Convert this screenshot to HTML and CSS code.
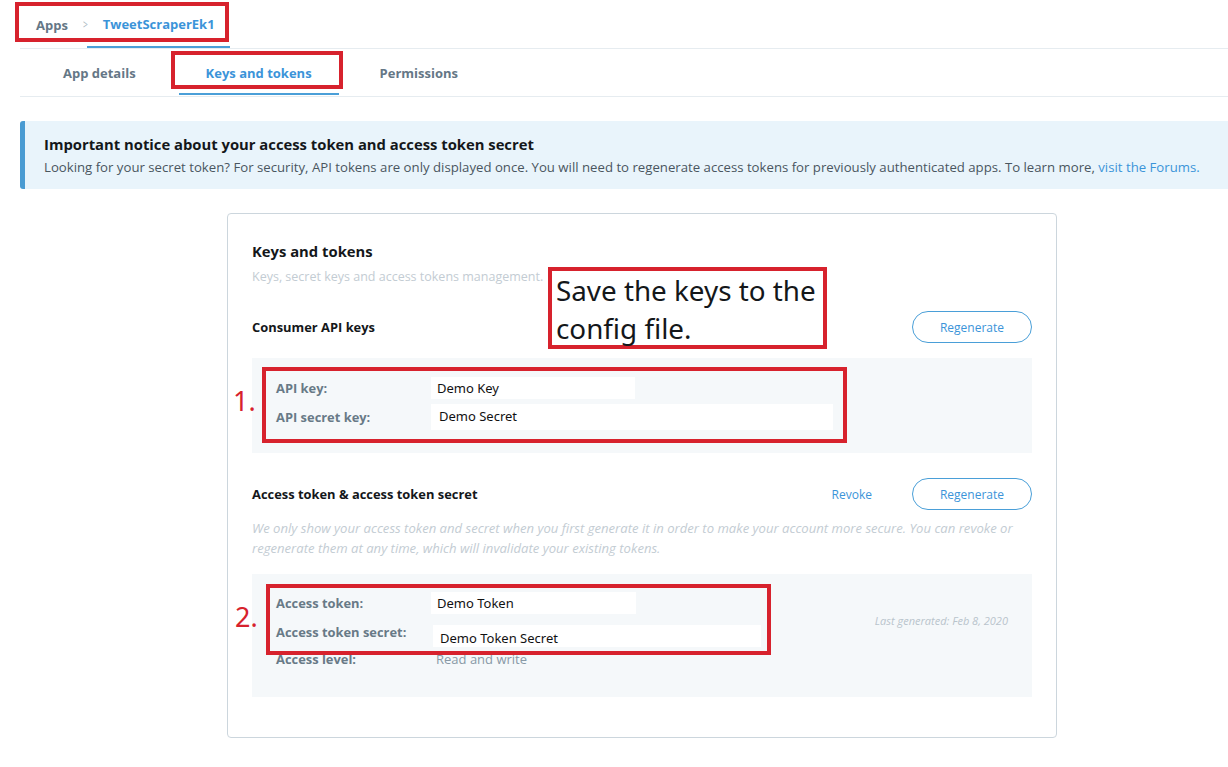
FILE: index.html
```html
<!DOCTYPE html>
<html>
<head>
<meta charset="utf-8">
<link rel="stylesheet" href="styles.css">
</head>
<body>
<div class="page">
  <div class="crumbbar">
    <div class="crumbs">
      <span class="crumb">Apps</span>
      <span class="chev">&gt;</span>
      <span class="crumb active">TweetScraperEk1</span>
    </div>
    <div class="mark mark-crumb"></div>
  </div>
  <nav class="tabs">
    <span class="tab tab-first">App details</span>
    <span class="tab active">Keys and tokens</span>
    <span class="tab tab-last">Permissions</span>
    <div class="mark mark-tab"></div>
  </nav>

  <div class="notice">
    <div class="notice-title">Important notice about your access token and access token secret</div>
    <div class="notice-text">Looking for your secret token? For security, API tokens are only displayed once. You will need to regenerate access tokens for previously authenticated apps. To learn more, <a class="link">visit the Forums.</a></div>
  </div>

  <div class="card">
    <h2 class="card-title">Keys and tokens</h2>
    <p class="card-sub">Keys, secret keys and access tokens management.</p>

    <div class="section-head head-consumer">
      <h3 class="section-title">Consumer API keys</h3>
      <div class="actions"><button class="btn">Regenerate</button></div>
    </div>

    <div class="keybox box1">
      <div class="kv"><span class="k">API key:</span><span class="v v1">Demo Key</span></div>
      <div class="kv kv-tall"><span class="k">API secret key:</span><span class="v v2">Demo Secret</span></div>
      <div class="mark mark-box1"></div>
      <span class="num num1">1.</span>
    </div>

    <div class="section-head head-access">
      <h3 class="section-title">Access token &amp; access token secret</h3>
      <div class="actions"><a class="revoke">Revoke</a><button class="btn">Regenerate</button></div>
    </div>
    <p class="note">We only show your access token and secret when you first generate it in order to make your account more secure. You can revoke or regenerate them at any time, which will invalidate your existing tokens.</p>

    <div class="keybox box2">
      <div class="box2-rows">
        <div class="kv"><span class="k">Access token:</span><span class="v v3">Demo Token</span></div>
        <div class="kv kv-tall2"><span class="k k-up">Access token secret:</span><span class="v v4">Demo Token Secret</span></div>
        <div class="kv kv-plain"><span class="k">Access level:</span><span class="plain">Read and write</span></div>
      </div>
      <div class="lastgen">Last generated: Feb 8, 2020</div>
      <div class="mark mark-box2"></div>
      <span class="num num2">2.</span>
    </div>

    <div class="annot">Save the keys to the config file.</div>
  </div>
</div>
</body>
</html>
```

FILE: styles.css
```css
* { box-sizing: border-box; }
html, body { margin: 0; padding: 0; background: #fff; }
body {
  font-family: "Open Sans", "Noto Sans", "DejaVu Sans", sans-serif;
  color: #14171a;
  width: 1228px;
  height: 767px;
  overflow: hidden;
}
.page { padding-left: 20px; }

.mark {
  position: absolute;
  border: 4px solid #d7222d;
  pointer-events: none;
}

/* breadcrumb */
.crumbbar {
  position: relative;
  height: 49px;
  border-bottom: 1px solid #e6ecf0;
  padding-left: 16px;
}
.crumbs {
  display: flex;
  align-items: stretch;
  height: 48px;
  font-size: 13px;
  font-weight: 700;
}
.crumb {
  display: flex;
  align-items: center;
  padding-top: 5px;
  padding-bottom: 3px;
  color: #657786;
}
.crumb.active {
  color: #3b94d9;
  border-bottom: 2px solid #4a9fd8;
  margin-left: -16px;
  padding-left: 16px;
  padding-right: 15px;
}
.chev {
  display: flex;
  align-items: center;
  padding: 5px 14px 5px 14px;
  font-weight: 400;
  color: #aab8c2;
  font-size: 12px;
  transform: scaleX(0.7);
}
.mark-crumb { left: -5px; top: 2px; width: 214px; height: 40px; }

/* tabs */
.tabs {
  position: relative;
  display: flex;
  height: 48px;
  border-bottom: 1px solid #e6ecf0;
  font-size: 13px;
  font-weight: 700;
}
.tab {
  display: flex;
  align-items: center;
  color: #657786;
}
.tab-first { margin-left: 43px; }
.tab.active {
  color: #3b94d9;
  margin-left: 43px;
  padding: 3px 27px 0 27px;
  border-bottom: 2px solid #4a9fd8;
  margin-bottom: 1px;
}
.tab-last { margin-left: 41px; }
.mark-tab { left: 151px; top: 2px; width: 172px; height: 38px; }

/* notice */
.notice {
  margin-top: 24px;
  height: 68px;
  background: #e9f4fb;
  border-left: 5px solid #4a9bd2;
  border-radius: 3px 0 0 3px;
  padding: 12px 0 0 19px;
}
.notice-title {
  font-size: 14.8px;
  font-weight: 700;
  line-height: 22px;
  color: #14171a;
}
.notice-text {
  font-size: 13.2px;
  line-height: 24px;
  color: #4a565f;
  white-space: nowrap;
}
.link { color: #3b94d9; }

/* card */
.card {
  position: relative;
  margin: 24px 0 0 207px;
  width: 830px;
  height: 525px;
  border: 1px solid #ccd6dd;
  border-radius: 4px;
  padding: 26px 24px 0 24px;
}
.card-title {
  margin: 0;
  font-size: 14.8px;
  line-height: 22px;
  font-weight: 700;
}
.card-sub {
  margin: 6px 0 0;
  font-size: 12.5px;
  line-height: 18px;
  color: #c3ccd3;
}
.section-head {
  display: flex;
  justify-content: space-between;
  align-items: center;
  height: 32px;
}
.head-consumer { margin-top: 25px; }
.head-access { margin-top: 25px; }
.section-title {
  margin: 0;
  font-size: 12.9px;
  font-weight: 700;
}
.actions { display: flex; align-items: center; }
.btn {
  width: 120px;
  height: 32px;
  border: 1px solid #4a9fd8;
  border-radius: 16px;
  background: #fff;
  color: #3b94d9;
  font-family: inherit;
  font-size: 12px;
  padding: 0;
}
.revoke {
  color: #3b94d9;
  font-size: 12px;
  margin-right: 40px;
}

.keybox {
  position: relative;
  background: #f5f8fa;
  width: 780px;
}
.box1 { margin-top: 15px; height: 95px; padding: 19px 0 0 24px; }
.kv {
  display: flex;
  align-items: center;
  height: 22px;
}
.kv-tall { height: 26px; margin-top: 5px; }
.k {
  width: 155px;
  font-size: 12.9px;
  font-weight: 700;
  color: #687a87;
}
.v {
  display: flex;
  align-items: center;
  align-self: stretch;
  background: #fff;
  font-family: "Noto Sans", "Open Sans", sans-serif;
  font-size: 13px;
  color: #111;
  padding-left: 6px;
}
.v1 { width: 204px; }
.v2 { width: 402px; padding-left: 8px; padding-bottom: 2px; }
.v3 { width: 205px; }
.v4 { width: 328px; margin-left: 2px; padding-left: 7px; padding-top: 4px; }
.plain { font-size: 13px; color: #8899a6; padding-left: 5px; }

.note {
  margin: 8px 0 0;
  font-size: 13.1px;
  line-height: 20px;
  font-style: italic;
  color: #c3ccd3;
}
.box2 {
  margin-top: 16px;
  height: 123px;
  display: flex;
  justify-content: space-between;
  padding: 18px 24px 0 24px;
}
.kv-tall2 { height: 22px; margin-top: 11px; }
.k-up { align-self: flex-start; margin-top: -2px; }
.kv-plain { height: 18px; margin-top: 3px; }
.lastgen {
  margin-top: 21px;
  font-size: 11px;
  font-style: italic;
  color: #b9c4cc;
}

.mark-box1 { left: 10px; top: 9px; width: 585px; height: 76px; }
.mark-box2 { left: 14px; top: 10px; width: 505px; height: 71px; }
.num {
  position: absolute;
  font-family: "Noto Sans", "Open Sans", sans-serif;
  font-size: 27px;
  line-height: 30px;
  color: #d7222d;
}
.num1 { left: -19px; top: 28px; }
.num2 { left: -17px; top: 28px; }

.annot {
  position: absolute;
  left: 320px;
  top: 53px;
  width: 279px;
  height: 82px;
  border: 4px solid #d7222d;
  background: #fff;
  padding: 0 0 0 4px;
  font-family: "Noto Sans", "Open Sans", sans-serif;
  font-size: 27.8px;
  line-height: 38px;
  color: #14171a;
}
```
